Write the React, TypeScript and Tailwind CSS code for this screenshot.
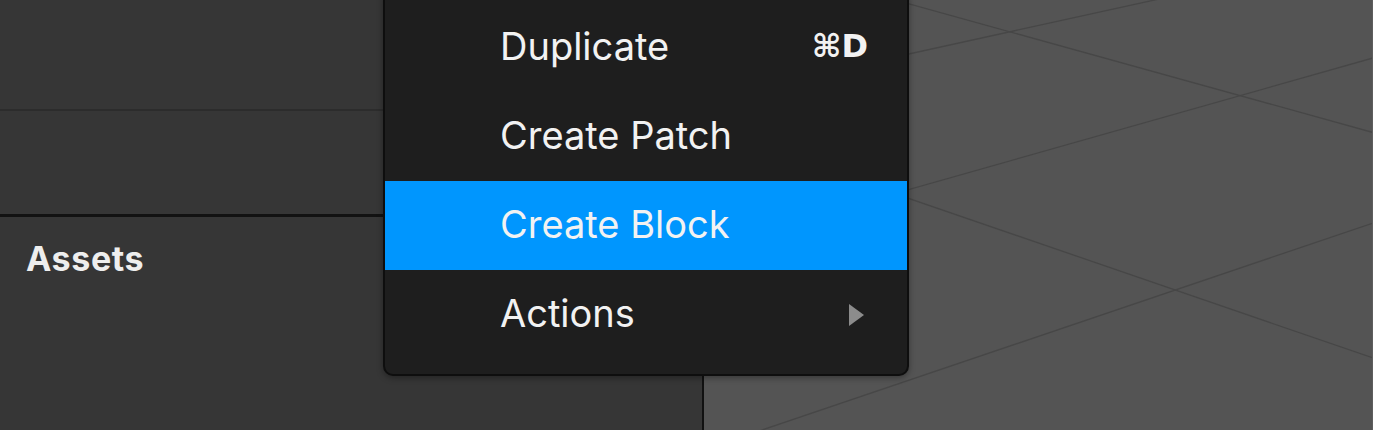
import React from "react";

const items = [
  { label: "Duplicate", shortcut: "⌘D" },
  { label: "Create Patch" },
  { label: "Create Block", active: true },
  { label: "Actions", submenu: true },
];

export default function App() {
  return (
    <div
      className="relative w-[1380px] h-[432px] overflow-hidden bg-white"
      style={{ fontFamily: "Inter, 'Noto Sans', 'DejaVu Sans', sans-serif" }}
    >
      <div className="flex h-[430px] w-[1373px]">
        {/* Left panel */}
        <div className="flex w-[702px] flex-col bg-[#363636]">
          <div className="h-[109px]" />
          <div className="h-[2px] bg-[#2c2c2c]" />
          <div className="h-[103px]" />
          <div className="h-[3px] bg-[#121212]" />
          <div className="flex-1 pl-[26px] pt-[22px]">
            <div className="text-[34px] font-bold leading-[40px] tracking-[0.6px] text-[#eeeeee]">Assets</div>
          </div>
        </div>
        <div className="w-[2px] bg-[#111111]" />
        {/* Canvas */}
        <div className="relative flex-1 bg-[#545454]">
          <svg className="absolute inset-0" width="669" height="430" viewBox="0 0 669 430">
            <g stroke="#474747" strokeWidth="1.3" fill="none">
              <line x1="0" y1="99" x2="669" y2="-48" />
              <line x1="0" y1="-53" x2="669" y2="132.5" />
              <line x1="0" y1="247.5" x2="669" y2="58" />
              <line x1="0" y1="128" x2="669" y2="358" />
              <line x1="0" y1="449.7" x2="669" y2="223" />
            </g>
          </svg>
          <div className="absolute right-0 top-0 h-full w-[1px] bg-[#5e5e5e]" />
        </div>
      </div>

      {/* Context menu */}
      <div className="absolute left-[383px] top-[-13px] w-[526px] rounded-[10px] border-2 border-[#0e0e0e] bg-[#1e1e1e] pt-[14px] pb-[15px] shadow-[0_2px_6px_rgba(0,0,0,0.35)]">
        {items.map((it) => (
          <div
            key={it.label}
            className={`flex h-[89px] items-center justify-between pl-[115px] pr-[39px] ${
              it.active ? "bg-[#0096fe]" : ""
            }`}
          >
            <span className="mt-[-3px] text-[38px] leading-none text-[#f2f2f2]">{it.label}</span>
            {it.shortcut && (
              <span
                className="mt-[-3px] text-[32px] font-bold leading-none text-[#f2f2f2]"
                style={{ fontFamily: "'DejaVu Sans', Inter, sans-serif" }}
              >
                {it.shortcut}
              </span>
            )}
            {it.submenu && (
              <svg width="16" height="22" viewBox="0 0 16 22" className="mr-[3px]">
                <path d="M0 0 L15 11 L0 22 Z" fill="#8c8c8c" />
              </svg>
            )}
          </div>
        ))}
      </div>
    </div>
  );
}
